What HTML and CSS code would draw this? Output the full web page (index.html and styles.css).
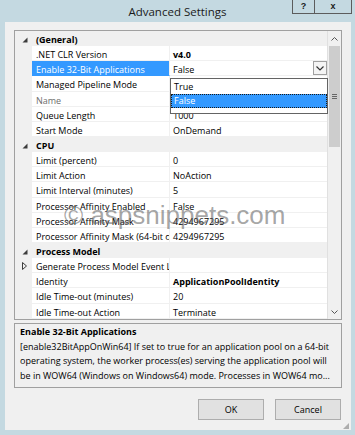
FILE: index.html
```html
<!DOCTYPE html>
<html>
<head>
<meta charset="utf-8">
<title>Advanced Settings</title>
<link rel="stylesheet" href="styles.css">
</head>
<body>
<div class="window">
  <div class="titlebar">
    <div></div>
    <div class="title">Advanced Settings</div>
    <div class="controls">
      <div class="cbtn help">?</div>
      <div class="cbtn close">x</div>
    </div>
  </div>
  <div class="client">
    <div class="pgrid">
      <div class="rows">
        <div class="cat"><span class="gut"><svg width="6" height="6" viewBox="0 0 6 6"><polygon points="5.5,0.5 5.5,5.5 0.5,5.5" fill="#3c3c3c"/></svg></span><span class="lbl">(General)</span></div>
        <div class="row"><span class="gut"></span><span class="name">.NET CLR Version</span><span class="val bold">v4.0</span></div>
        <div class="row sel"><span class="gut"></span><span class="name">Enable 32-Bit Applications</span><span class="val">False<span class="ddbtn"><svg width="8" height="5" viewBox="0 0 8 5"><polyline points="0.5,0.5 4,4 7.5,0.5" fill="none" stroke="#333" stroke-width="1.2"/></svg></span></span></div>
        <div class="row"><span class="gut"></span><span class="name">Managed Pipeline Mode</span><span class="val">Integrated</span></div>
        <div class="row"><span class="gut"></span><span class="name dis">Name</span><span class="val">DefaultAppPool</span></div>
        <div class="row"><span class="gut"></span><span class="name">Queue Length</span><span class="val">1000</span></div>
        <div class="row"><span class="gut"></span><span class="name">Start Mode</span><span class="val">OnDemand</span></div>
        <div class="cat"><span class="gut"><svg width="6" height="6" viewBox="0 0 6 6"><polygon points="5.5,0.5 5.5,5.5 0.5,5.5" fill="#3c3c3c"/></svg></span><span class="lbl">CPU</span></div>
        <div class="row"><span class="gut"></span><span class="name">Limit (percent)</span><span class="val">0</span></div>
        <div class="row"><span class="gut"></span><span class="name">Limit Action</span><span class="val">NoAction</span></div>
        <div class="row"><span class="gut"></span><span class="name">Limit Interval (minutes)</span><span class="val">5</span></div>
        <div class="row"><span class="gut"></span><span class="name">Processor Affinity Enabled</span><span class="val">False</span></div>
        <div class="row"><span class="gut"></span><span class="name">Processor Affinity Mask</span><span class="val">4294967295</span></div>
        <div class="row"><span class="gut"></span><span class="name">Processor Affinity Mask (64-bit option)</span><span class="val">4294967295</span></div>
        <div class="cat"><span class="gut"><svg width="6" height="6" viewBox="0 0 6 6"><polygon points="5.5,0.5 5.5,5.5 0.5,5.5" fill="#3c3c3c"/></svg></span><span class="lbl">Process Model</span></div>
        <div class="row"><span class="gut"><svg width="5" height="8" viewBox="0 0 5 8"><polygon points="0.5,0.5 4.5,4 0.5,7.5" fill="none" stroke="#3c3c3c" stroke-width="1"/></svg></span><span class="name">Generate Process Model Event Log Entry</span><span class="val"></span></div>
        <div class="row"><span class="gut"></span><span class="name">Identity</span><span class="val bold">ApplicationPoolIdentity</span></div>
        <div class="row"><span class="gut"></span><span class="name">Idle Time-out (minutes)</span><span class="val">20</span></div>
        <div class="row"><span class="gut"></span><span class="name">Idle Time-out Action</span><span class="val">Terminate</span></div>
      </div>
      <div class="vscroll">
        <div class="sbtn"><svg width="7" height="4" viewBox="0 0 7 4"><polyline points="0.5,3.5 3.5,0.5 6.5,3.5" fill="none" stroke="#555" stroke-width="1"/></svg></div>
        <div class="thumb"><span class="grip-lines"></span></div>
        <div class="track"></div>
        <div class="sbtn"><svg width="7" height="4" viewBox="0 0 7 4"><polyline points="0.5,0.5 3.5,3.5 6.5,0.5" fill="none" stroke="#555" stroke-width="1"/></svg></div>
      </div>
      <div class="dropdown">
        <div class="opt">True</div>
        <div class="opt on">False</div>
      </div>
      <div class="watermark">© aspsnippets.com</div>
    </div>
    <div class="desc">
      <div class="dtitle">Enable 32-Bit Applications</div>
      <div class="dtext">[enable32BitAppOnWin64] If set to true for an application pool on a 64-bit<br>operating system, the worker process(es) serving the application pool will<br>be in WOW64 (Windows on Windows64) mode. Processes in WOW64 mo...</div>
    </div>
    <div class="buttons">
      <div class="btn">OK</div>
      <div class="btn">Cancel</div>
    </div>
    <div class="sizegrip"></div>
  </div>
</div>
</body>
</html>
```
FILE: styles.css
```css
html, body {
  margin: 0;
  padding: 0;
}
body {
  background: #c4d9e1;
  font-family: "Open Sans", "Noto Sans", sans-serif;
  color: #000;
}
.window {
  width: 355px;
  height: 435px;
  display: flex;
  flex-direction: column;
}
.titlebar {
  height: 22px;
  display: grid;
  grid-template-columns: 1fr auto 1fr;
  align-items: start;
}
.title {
  font-size: 11.5px;
  line-height: 23px;
  color: #1a1a1a;
}
.controls {
  justify-self: end;
  display: flex;
  margin-right: 3px;
}
.cbtn {
  box-sizing: border-box;
  height: 14px;
  border: 1px solid #5c5c5c;
  border-top: none;
  font-family: "Liberation Sans", sans-serif;
  font-weight: bold;
  font-size: 9px;
  line-height: 12px;
  text-align: center;
  color: #1a1a1a;
}
.help { width: 23px; }
.close { width: 37px; border-left: none; }

.client {
  margin: 0 4px 0 5px;
  height: 408px;
  box-sizing: border-box;
  background: #f0f0f0;
  padding: 8px 9px 0 9px;
  display: flex;
  flex-direction: column;
  position: relative;
  font-size: 9px;
}
.pgrid {
  position: relative;
  height: 290px;
  box-sizing: border-box;
  border: 1px solid #a0a0a0;
  background: #fff;
  display: flex;
  overflow: hidden;
}
.rows {
  width: 312px;
  display: flex;
  flex-direction: column;
}
.row, .cat {
  height: 15.15px;
  display: flex;
  flex: none;
  line-height: 14px;
  white-space: nowrap;
}
.gut {
  width: 17px;
  flex: none;
  background: #f0f0f0;
  display: flex;
  align-items: center;
  justify-content: center;
  padding-left: 2px;
  box-sizing: border-box;
}
.cat {
  background: #f0f0f0;
}
.cat .gut svg { margin-top: 2px; }
.row .gut svg { margin-top: 1px; }
.lbl {
  font-weight: bold;
  padding-left: 4px;
  padding-top: 2px;
}
.name {
  width: 138px;
  flex: none;
  box-sizing: border-box;
  padding-left: 4px;
  padding-top: 2px;
  overflow: hidden;
  border-right: 1px solid #f0f0f0;
  border-bottom: 1px solid #f0f0f0;
}
.name.dis { color: #6d6d6d; }
.val {
  flex: 1;
  box-sizing: border-box;
  padding-left: 3px;
  padding-top: 2px;
  border-bottom: 1px solid #f0f0f0;
  position: relative;
  overflow: hidden;
}
.bold { font-weight: bold; }
.sel .name {
  background: #3399ff;
  color: #fff;
  border-bottom-color: #3399ff;
}
.ddbtn {
  position: absolute;
  right: 0;
  top: 0;
  width: 14px;
  height: 14px;
  box-sizing: border-box;
  border: 1px solid #a0a0a0;
  background: #f4f4f4;
  display: flex;
  align-items: center;
  justify-content: center;
}
.vscroll {
  width: 14px;
  display: flex;
  flex-direction: column;
  background: #f0f0f0;
  border-left: 1px solid #e0e0e0;
  box-sizing: border-box;
}
.sbtn {
  height: 15px;
  flex: none;
  display: flex;
  align-items: center;
  justify-content: center;
  background: #f0f0f0;
}
.thumb {
  height: 101px;
  flex: none;
  background: #cdcdcd;
  margin: 0 1px;
  display: flex;
  align-items: center;
  justify-content: center;
}
.grip-lines {
  width: 5px;
  height: 5px;
  background: linear-gradient(#666 0 1px, transparent 1px 2px, #666 2px 3px, transparent 3px 4px, #666 4px 5px);
}
.track { flex: 1; }
.dropdown {
  position: absolute;
  left: 155px;
  top: 47px;
  width: 158px;
  height: 36px;
  box-sizing: border-box;
  border: 1px solid #646464;
  background: #fff;
  padding: 0;
}
.opt {
  height: 14.5px;
  line-height: 14px;
  padding-left: 3px;
  padding-top: 1px;
  box-sizing: border-box;
}
.opt.on {
  background: #3399ff;
  color: #fff;
  border: 1px dotted #1a1a1a;
  padding-left: 2px;
  padding-top: 0;
  line-height: 12px;
}
.watermark {
  position: absolute;
  left: 49px;
  top: 169px;
  font-family: "Liberation Sans", sans-serif;
  font-size: 26px;
  line-height: 30px;
  color: rgba(90, 90, 90, 0.55);
  white-space: nowrap;
  pointer-events: none;
}
.desc {
  margin-top: 3px;
  height: 65px;
  box-sizing: border-box;
  border: 1px solid #a0a0a0;
  padding: 1px 5px 0;
  line-height: 14.5px;
  white-space: nowrap;
  overflow: hidden;
}
.dtitle { font-weight: bold; }
.buttons {
  margin-top: 11px;
  display: flex;
  justify-content: flex-end;
  gap: 11px;
  padding-right: 1px;
}
.btn {
  width: 66px;
  height: 21px;
  box-sizing: border-box;
  border: 1px solid #adadad;
  background: #e1e1e1;
  text-align: center;
  line-height: 19px;
}
.sizegrip {
  position: absolute;
  right: 2px;
  bottom: 1px;
  width: 6px;
  height: 6px;
  background:
    radial-gradient(circle, #a8a8a8 0.7px, transparent 0.8px) 0 0 / 2px 2px;
  clip-path: polygon(100% 0, 100% 100%, 0 100%);
}
```
